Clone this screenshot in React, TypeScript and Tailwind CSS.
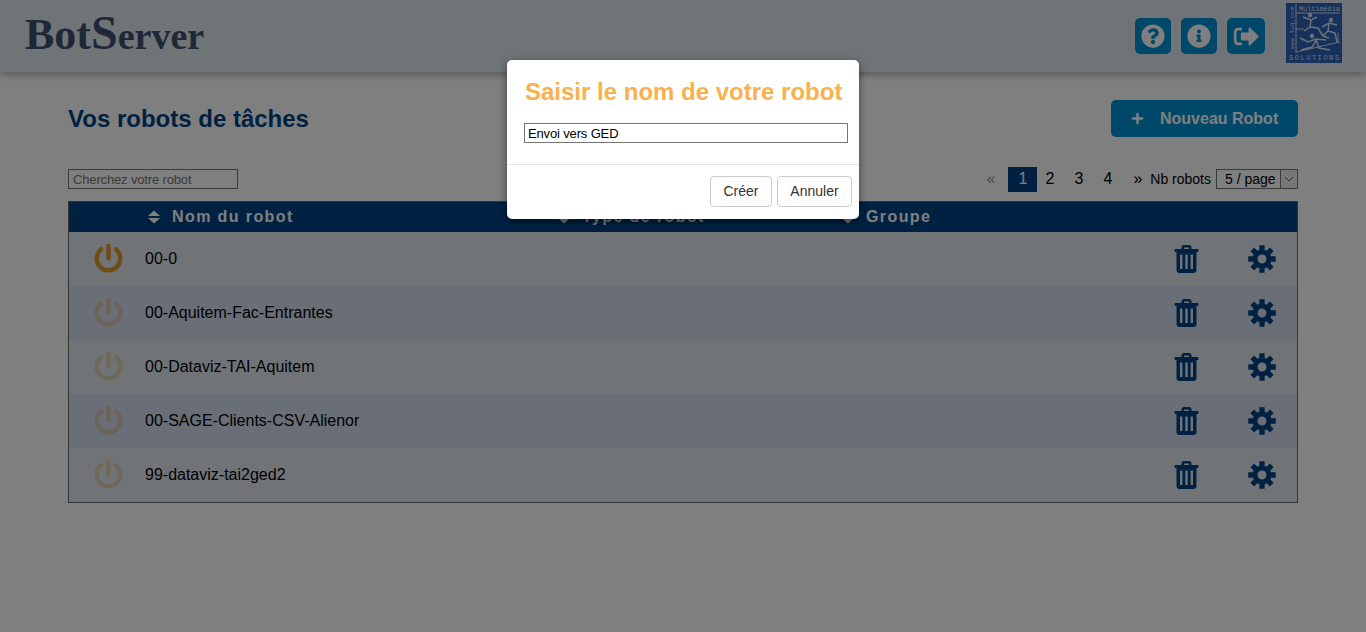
import React from 'react';
import { FaQuestionCircle, FaInfoCircle, FaPlus, FaPowerOff } from 'react-icons/fa';

const robots = [
  { name: '00-0', active: true },
  { name: '00-Aquitem-Fac-Entrantes', active: false },
  { name: '00-Dataviz-TAI-Aquitem', active: false },
  { name: '00-SAGE-Clients-CSV-Alienor', active: false },
  { name: '99-dataviz-tai2ged2', active: false },
];

const arial = 'font-["Liberation_Sans",Arial,sans-serif]';

// sign-out icon: open bracket on the left and a fat arrow
const ExitIcon = () => (
  <svg viewBox="0 0 30 24" className="h-[21px] w-[26px]" fill="white">
    <path d="M9 2H6a5 5 0 0 0-5 5v10a5 5 0 0 0 5 5h3a1 1 0 0 0 0-3H6a2 2 0 0 1-2-2V7a2 2 0 0 1 2-2h3a1 1 0 0 0 0-3z" />
    <path d="M18 2.500a1 1 0 0 1 1.700-.7L29.400 11.300a1 1 0 0 1 0 1.400L19.700 22.200a1 1 0 0 1-1.700-.7V16.500H10.500a1.500 1.500 0 0 1-1.500-1.500V9a1.500 1.500 0 0 1 1.500-1.500H18z" />
  </svg>
);

const SortIcon = () => (
  <svg viewBox="0 0 12 14" className="h-[14px] w-[12px]" fill="white">
    <path d="M6 0.500L11.500 5.500Q12 6 11 6H1Q0 6 0.500 5.500z" />
    <path d="M6 13.500L11.500 8.500Q12 8 11 8H1Q0 8 0.500 8.500z" />
  </svg>
);

const TrashIcon = () => (
  <svg viewBox="0 0 24 28" className="h-[28px] w-[25px]" fill="#004284">
    <path d="M7 4V2.500A2.500 2.500 0 0 1 9.500 0h5A2.500 2.500 0 0 1 17 2.500V4h6a1 1 0 0 1 1 1v1a1 1 0 0 1-1 1h-1v18a3 3 0 0 1-3 3H5a3 3 0 0 1-3-3V7H1a1 1 0 0 1-1-1V5a1 1 0 0 1 1-1zM9.500 4h5V2.500h-5z" fillRule="evenodd" />
    <path d="M5.500 9.500h2.400v14.500H5.500zM10.800 9.500h2.400v14.500h-2.400zM16.100 9.500h2.400v14.500h-2.400z" fill="#dfe8f2" />
  </svg>
);

// 8 teeth gear, path built once from polar points
const gearPath = (() => {
  const pts: string[] = [];
  for (let t = 0; t < 8; t++) {
    const a = (t * Math.PI) / 4;
    [
      [-0.28, 9.5],
      [-0.19, 14],
      [0.19, 14],
      [0.28, 9.5],
    ].forEach(([da, r]) => {
      pts.push(`${(14 + r * Math.sin(a + da)).toFixed(2)} ${(14 - r * Math.cos(a + da)).toFixed(2)}`);
    });
  }
  return `M${pts.join('L')}zM14 9.500a4.500 4.500 0 1 0 0 9a4.500 4.500 0 1 0 0-9z`;
})();

const GearIcon = () => (
  <svg viewBox="0 0 28 28" className="h-[28px] w-[28px]" fill="#004284">
    <path d={gearPath} fillRule="evenodd" />
  </svg>
);

const CompanyLogo = () => (
  <svg viewBox="0 0 56 60" className="h-[60px] w-[56px]">
    <rect width="56" height="60" fill="#2a62b8" />
    <g stroke="#dbe4f0" fill="none">
      <path strokeWidth="1" d="M10 1v49M10 10h44M10 26h8M52 30v10M10 49l44-10" />
      <path strokeWidth="1.500" d="M17 14l8 3 6-3M25 17l-1 7-6 4M24 24l8 1 5 8 6 2" />
      <path strokeWidth="1.500" d="M36 24l7-4 8 2M43 20l-1 8-5 5M42 28l7 2 2 9" />
      <path strokeWidth="1.500" d="M14 35l8 4 8-3 10 1M30 36l3 9 11 2M30 38l-4 6-11 3" />
    </g>
    <circle cx="24" cy="12" r="2.200" fill="#dbe4f0" />
    <circle cx="45" cy="17" r="2.200" fill="#dbe4f0" />
    <circle cx="26" cy="33" r="2.200" fill="#dbe4f0" />
    <text x="13" y="8" fontSize="7" fill="#dbe4f0" fontFamily="Liberation Mono" textLength="41">Multimédia</text>
    <text x="0" y="0" fontSize="6" fill="#dbe4f0" fontFamily="Liberation Mono" textLength="42" transform="translate(8 46) rotate(-90)">www.luq.com</text>
    <text x="3" y="57" fontSize="7" fill="#dbe4f0" fontFamily="Liberation Mono" textLength="50">SOLUTIONS</text>
  </svg>
);

const HeaderCell = ({ label, className }: { label: string; className: string }) => (
  <div className={`flex items-center gap-[12px] ${className}`}>
    <SortIcon />
    <span className="text-[16px] font-bold tracking-[1.4px] text-white">{label}</span>
  </div>
);

const App: React.FC = () => {
  return (
    <div className={`relative h-[632px] w-[1366px] overflow-hidden bg-white ${arial}`}>
      <header className="relative flex h-[72px] items-center justify-between bg-[#dfe8ef] pl-[25px] pr-[24px] shadow-[0_2px_8px_rgba(0,0,0,0.35)]">
        <div className='mt-[-6px] flex items-baseline font-["Liberation_Serif",serif] font-bold leading-none text-[#3f5070]'>
          <span className="text-[44px]">Bot</span>
          <span className="text-[48px]">S</span>
          <span className="text-[38px]">erver</span>
        </div>
        <div className="flex items-center">
          <button className="flex h-[36px] w-[36px] items-center justify-center rounded-[5px] bg-[#0090d4] text-white">
            <FaQuestionCircle className="h-[24px] w-[24px]" />
          </button>
          <button className="ml-[10px] flex h-[36px] w-[36px] items-center justify-center rounded-[5px] bg-[#0090d4] text-white">
            <FaInfoCircle className="h-[24px] w-[24px]" />
          </button>
          <button className="ml-[10px] flex h-[36px] w-[38px] items-center justify-center rounded-[5px] bg-[#0090d4] text-white">
            <ExitIcon />
          </button>
          <div className="ml-[21px] mt-[-6px]">
            <CompanyLogo />
          </div>
        </div>
      </header>

      <main className="px-[68px]">
        <div className="flex h-[91px] items-start justify-between pt-[28px]">
          <h1 className="mt-[1px] text-[24px] font-bold leading-[36px] text-[#004284]">Vos robots de tâches</h1>
          <button className="flex h-[37px] w-[187px] items-center rounded-[5px] bg-[#0090d4] pl-[20px] text-[16px] font-bold text-white">
            <FaPlus className="h-[13px] w-[13px]" />
            <span className="ml-[16px]">Nouveau Robot</span>
          </button>
        </div>

        <div className="mb-[6px] flex h-[32px] items-center justify-between">
          <input
            className="h-[20px] w-[170px] border border-[#767676] bg-white px-[4px] text-[13px] tracking-[-0.15px] text-black outline-none placeholder:text-[#757575]"
            placeholder="Cherchez votre robot"
          />
          <div className="flex items-center text-[16px] text-black">
            <span className="w-[22px] text-[#999]">«</span>
            <span className="flex h-[25px] w-[29px] items-center justify-center bg-[#004284] text-white">1</span>
            <span className="ml-[-2px] flex h-[25px] w-[29px] items-center justify-center">2</span>
            <span className="flex h-[25px] w-[29px] items-center justify-center">3</span>
            <span className="flex h-[25px] w-[29px] items-center justify-center">4</span>
            <span className="ml-[11px]">»</span>
            <span className="ml-[8px] text-[14px]">Nb robots</span>
            <div className="ml-[5px] flex h-[20px] w-[82px] items-center justify-between border border-[#767676] pl-[8px] text-[14px]">
              <span>5 / page</span>
              <span className="flex h-[18px] w-[17px] items-center justify-center border-l border-[#767676] bg-[#efefef]">
                <svg viewBox="0 0 10 6" className="h-[6px] w-[10px]" fill="none" stroke="#555" strokeWidth="1">
                  <path d="M1 1l4 4 4-4" />
                </svg>
              </span>
            </div>
          </div>
        </div>

        <section className="border border-[#666]">
          <div className="flex h-[30px] items-center bg-[#004284]">
            <HeaderCell label="Nom du robot" className="ml-[79px] w-[410px]" />
            <HeaderCell label="Type de robot" className="w-[284px]" />
            <HeaderCell label="Groupe" className="w-[200px]" />
          </div>
          {robots.map((robot, i) => (
            <div
              key={robot.name}
              className={`flex h-[54px] items-center ${i % 2 === 0 ? 'bg-[#e0e9ef]' : 'bg-[#d5dcee]'}`}
            >
              <div className="mb-[1px] flex w-[76px] justify-center pl-[3px]">
                <FaPowerOff className={`h-[29px] w-[29px] text-[#e0982f] ${robot.active ? '' : 'opacity-30'}`} />
              </div>
              <span className="flex-1 text-[16px] text-black">{robot.name}</span>
              <TrashIcon />
              <div className="flex w-[98px] justify-start pl-[49px]">
                <GearIcon />
              </div>
            </div>
          ))}
        </section>
      </main>

      {/* modal backdrop */}
      <div className="absolute inset-0 flex justify-center bg-black/50 pt-[60px]">
        <div className="h-[159px] w-[352px] rounded-[5px] bg-white shadow-[0_3px_9px_rgba(0,0,0,0.5)]">
          <div className="h-[105px] border-b border-[#e5e5e5] px-[17px]">
            <h2 className="pl-[1px] pt-[15px] text-[24px] font-bold leading-[34px] text-[#fbb04c] whitespace-nowrap">
              Saisir le nom de votre robot
            </h2>
            <input
              className="mt-[14px] block h-[20px] w-[324px] border border-[#767676] px-[3px] text-[13px] tracking-[-0.15px] text-black outline-none"
              defaultValue="Envoi vers GED"
            />
          </div>
          <div className="flex justify-end gap-[5px] pr-[7px] pt-[11px]">
            <button className="h-[31px] w-[62px] rounded-[4px] border border-[#ccc] bg-white text-[14px] text-[#333]">Créer</button>
            <button className="h-[31px] w-[75px] rounded-[4px] border border-[#ccc] bg-white text-[14px] text-[#333]">Annuler</button>
          </div>
        </div>
      </div>
    </div>
  );
};

export default App;
